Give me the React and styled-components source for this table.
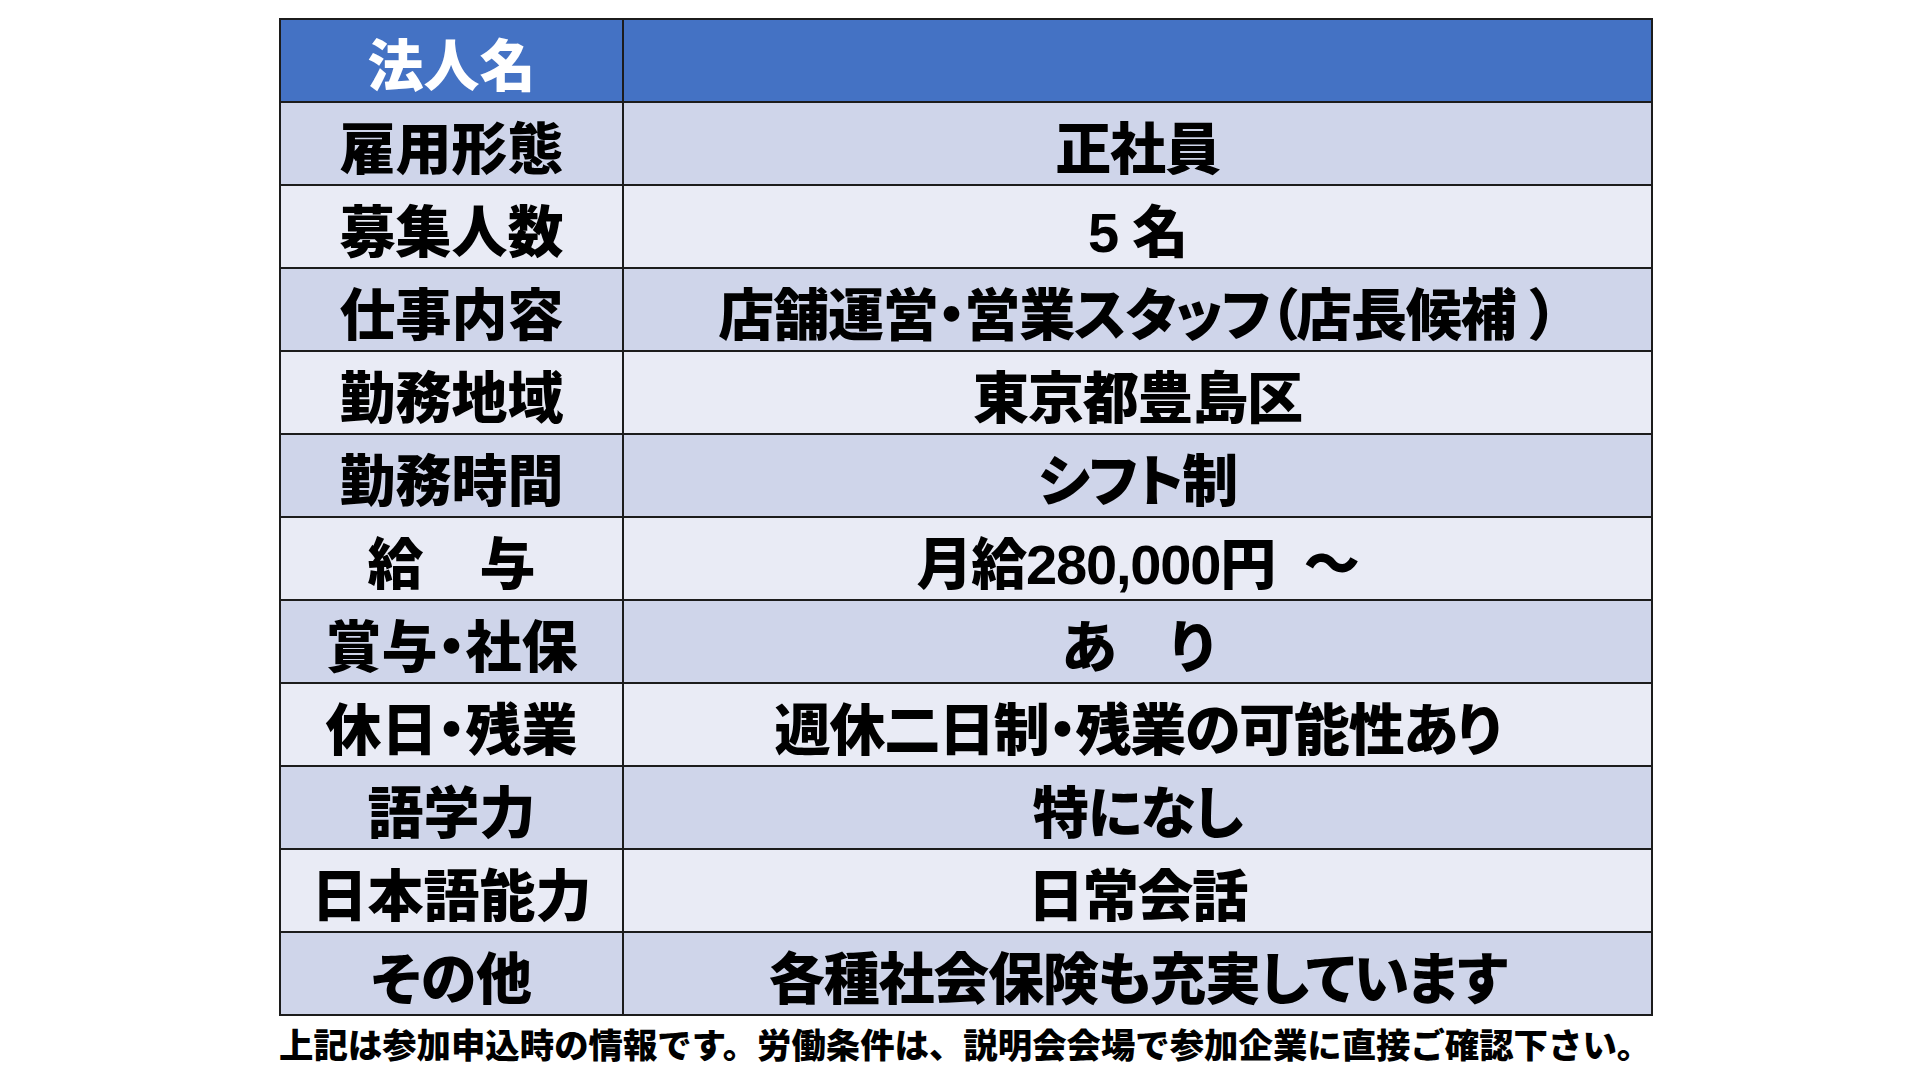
import React from "react";
import styled, { createGlobalStyle } from "styled-components";

const Global = createGlobalStyle`
  html, body { margin: 0; padding: 0; background: #ffffff; }
  body { font-family: "Liberation Sans", "Noto Sans CJK JP", sans-serif; }
`;

const Page = styled.div`
  width: 1920px;
  height: 1080px;
  box-sizing: border-box;
  padding: 18px 0 0 279px;
  background: #ffffff;
`;

const Table = styled.div`
  display: grid;
  grid-template-columns: 341px 1027px;
  grid-auto-rows: 81px;
  gap: 2px;
  padding: 2px;
  width: fit-content;
  background: #1c1c1c;
`;

const Cell = styled.div`
  display: flex;
  align-items: center;
  justify-content: center;
  padding-top: 12px;
  box-sizing: border-box;
  font-family: "Liberation Sans", "Noto Sans CJK JP", sans-serif;
  font-weight: 900;
  font-size: 56px;
  line-height: 1;
  white-space: pre;
  font-feature-settings: "palt" 1;
  letter-spacing: ${(p) => (p.$value ? "-1.2px" : "0")};
  color: ${(p) => (p.$tone === "head" ? "#ffffff" : "#000000")};
  background: ${(p) =>
    p.$tone === "head" ? "#4472c4" : p.$tone === "odd" ? "#cfd5ea" : "#e9ebf5"};
`;

const Note = styled.div`
  margin-top: 7px;
  font-family: "Noto Sans CJK JP", sans-serif;
  font-weight: 900;
  font-size: 34.4px;
  line-height: 1.2;
  color: #000000;
  white-space: nowrap;
`;

const rows = [
  ["雇用形態", "正社員"],
  ["募集人数", "5 名"],
  ["仕事内容", "店舗運営・営業スタッフ（店長候補 ）"],
  ["勤務地域", "東京都豊島区"],
  ["勤務時間", "シフト制"],
  ["給　与", "月給280,000円  ～"],
  ["賞与・社保", "あ　り"],
  ["休日・残業", "週休二日制・残業の可能性あり"],
  ["語学力", "特になし"],
  ["日本語能力", "日常会話"],
  ["その他", "各種社会保険も充実しています"],
];

export default function App() {
  return (
    <Page>
      <Global />
      <Table>
        <Cell $tone="head">法人名</Cell>
        <Cell $tone="head" $value></Cell>
        {rows.map(([label, value], i) => {
          const tone = i % 2 === 0 ? "odd" : "even";
          return (
            <React.Fragment key={label}>
              <Cell $tone={tone}>{label}</Cell>
              <Cell $tone={tone} $value>{value}</Cell>
            </React.Fragment>
          );
        })}
      </Table>
      <Note>上記は参加申込時の情報です。労働条件は、説明会会場で参加企業に直接ご確認下さい。</Note>
    </Page>
  );
}
